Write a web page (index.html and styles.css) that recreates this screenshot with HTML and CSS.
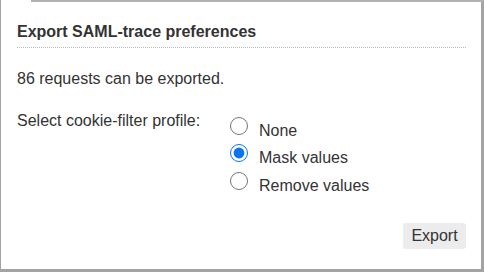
FILE: index.html
```html
<!DOCTYPE html>
<html lang="en">
<head>
    <meta charset="UTF-8">
    <title>Export SAML-trace preferences</title>
    <link rel="stylesheet" href="styles.css">
</head>
<body>
    <div class="backdrop-strip"></div>
    <div class="dialog">
        <h2 class="dialog-title">Export SAML-trace preferences</h2>
        <p class="count">86 requests can be exported.</p>

        <div class="filter-row">
            <span class="filter-label">Select cookie-filter profile:</span>
            <div class="radio-list">
                <label class="radio-option">
                    <input type="radio" name="cookieFilter" value="none">
                    <span>None</span>
                </label>
                <label class="radio-option">
                    <input type="radio" name="cookieFilter" value="mask" checked>
                    <span>Mask values</span>
                </label>
                <label class="radio-option">
                    <input type="radio" name="cookieFilter" value="remove">
                    <span>Remove values</span>
                </label>
            </div>
        </div>

        <div class="controls">
            <button class="export-btn">Export</button>
        </div>
    </div>
</body>
</html>
```
FILE: styles.css
```css
html, body {
    margin: 0;
    height: 100%;
}
body {
    background-color: #a3a3a3;
    font-family: "Liberation Sans", Arial, sans-serif;
    font-size: 16px;
    line-height: 18px;
    color: #333;
    position: relative;
    overflow: hidden;
}
.backdrop-strip {
    position: absolute;
    left: 31px;
    top: 0;
    width: 460px;
    height: 2px;
    background-color: #b0b0b0;
}
.dialog {
    background-color: white;
    width: 480px;
    height: 269px;
    margin-left: 1px;
    padding: 0 15px 0 16px;
    box-sizing: border-box;
    display: flex;
    flex-direction: column;
}
.dialog-title {
    font-size: 16px;
    line-height: 18px;
    font-weight: bold;
    color: #333;
    margin: 0;
    padding: 23px 0 6px;
    border-bottom: 1px dotted #bbb;
}
.count {
    margin: 22px 0 0;
}
.filter-row {
    display: flex;
    margin-top: 24px;
}
.filter-label {
    width: 213px;
}
.radio-list {
    display: flex;
    flex-direction: column;
    gap: 9.5px;
    padding-top: 9.5px;
}
.radio-option {
    display: flex;
    align-items: flex-start;
    gap: 11px;
}
.radio-option input {
    width: 18px;
    height: 18px;
    margin: -5px 0 0;
    accent-color: #0a74f0;
}
.controls {
    display: flex;
    justify-content: flex-end;
    margin-top: auto;
    padding-bottom: 20px;
}
.export-btn {
    font-family: inherit;
    font-size: 16px;
    color: #333;
    background-color: #ececec;
    border: none;
    border-radius: 3px;
    padding: 0;
    width: 63px;
    height: 26px;
}
```
